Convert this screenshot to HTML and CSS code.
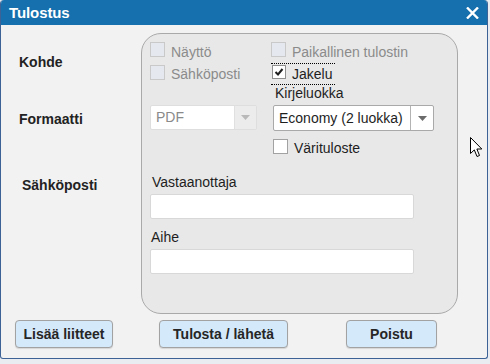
FILE: index.html
```html
<!DOCTYPE html>
<html lang="fi">
<head>
<meta charset="utf-8">
<title>Tulostus</title>
<link rel="stylesheet" href="styles.css">
</head>
<body>
<div class="window">
  <div class="titlebar">
    <span class="title">Tulostus</span>
    <svg class="close" width="13" height="12" viewBox="0 0 13 12"><path d="M1 0.5 L12 11.5 M12 0.5 L1 11.5" stroke="#fff" stroke-width="2.4" fill="none"/></svg>
  </div>
  <div class="content">
    <div class="main">
      <div class="labels">
        <div class="lbl kohde">Kohde</div>
        <div class="lbl formaatti">Formaatti</div>
        <div class="lbl sposti">Sähköposti</div>
      </div>
      <div class="panel">
        <div class="check r1"><span class="box disabled"></span><span class="txt dis">Näyttö</span></div>
        <div class="check r1"><span class="box disabled"></span><span class="txt dis">Paikallinen tulostin</span></div>
        <div class="check r2"><span class="box disabled"></span><span class="txt dis">Sähköposti</span></div>
        <div class="check focus"><span class="box small"><svg width="12" height="12" viewBox="0 0 12 12"><path d="M2.5 6 L5 8.5 L9.5 3" stroke="#1e1e1e" stroke-width="2" fill="none"/></svg></span><span class="txt">Jakelu</span></div>
        <div class="cell-empty"></div>
        <div class="kirje">Kirjeluokka</div>
        <div class="select pdf"><span class="val">PDF</span><span class="arr"><svg width="9" height="5" viewBox="0 0 9 5"><path d="M0 0 L9 0 L4.5 5 Z" fill="#b9b9b9"/></svg></span></div>
        <div class="select eco"><span class="val">Economy (2 luokka)</span><span class="arr"><svg width="9" height="5" viewBox="0 0 9 5"><path d="M0 0 L9 0 L4.5 5 Z" fill="#6b6b6b"/></svg></span></div>
        <div class="cell-empty"></div>
        <div class="check vari"><span class="box"></span><span class="txt">Värituloste</span></div>
        <div class="flabel l1">Vastaanottaja</div>
        <div class="input"></div>
        <div class="flabel l2">Aihe</div>
        <div class="input"></div>
      </div>
    </div>
    <div class="buttons">
      <button class="btn b1">Lisää liitteet</button>
      <button class="btn b2">Tulosta / lähetä</button>
      <button class="btn b3">Poistu</button>
    </div>
  </div>
  <svg class="cursor" width="13" height="21" viewBox="0 0 13 21"><path d="M0.5 0.5 L0.5 16.5 L4.3 12.9 L7 19.5 L9.5 18.5 L6.9 12 L11.8 12 Z" fill="#fff" stroke="#000" stroke-width="1"/></svg>
</div>
</body>
</html>
```
FILE: styles.css
```css
* { box-sizing: border-box; }
html, body { margin: 0; padding: 0; }
body {
  background: #e9edf1;
  font-family: "Liberation Sans", Arial, sans-serif;
  font-size: 14px;
  line-height: 16px;
  color: #1e1e1e;
  width: 490px;
  height: 364px;
  overflow: hidden;
}
.window {
  position: relative;
  width: 488px;
  height: 359px;
  background: #f2f2f2;
  border: 1px solid #3d6396;
  border-top: none;
  border-radius: 4px 4px 3px 3px;
  overflow: hidden;
}
.titlebar {
  height: 25px;
  background: #1570ad;
  display: flex;
  align-items: center;
  justify-content: space-between;
  padding: 0 8px 0 8px;
}
.title {
  color: #fff;
  font-weight: bold;
  font-size: 15px;
  line-height: 25px;
  letter-spacing: -0.1px;
}
.close { display: block; margin-top: 1px; margin-right: 0px; }
.main { display: flex; }
.labels { width: 140px; padding-left: 18px; }
.lbl { font-weight: bold; color: #222; }
.kohde { margin-top: 29px; }
.formaatti { margin-top: 41px; }
.sposti { margin-top: 50px; padding-left: 3px; }
.panel {
  margin-top: 8px;
  width: 317px;
  height: 281px;
  border: 1px solid #a9a9a9;
  border-radius: 20px;
  background: #e8e8e8;
  padding: 8px 0 0 8px;
  display: grid;
  grid-template-columns: 121px 164px;
  grid-template-rows: 21px 22px 20px 34px 35px 20px 35px 20px 25px;
  align-items: start;
}
.check { display: flex; align-items: flex-start; }
.box {
  width: 15px;
  height: 15px;
  border: 1px solid #a6a6a6;
  background: #fff;
  flex: none;
  display: flex;
  align-items: center;
  justify-content: center;
}
.box.disabled { background: #e5e8ee; border-color: #c9c9c9; }
.box.small { width: 14px; height: 14px; border-color: #8f8f8f; margin: 1px 0 0 1px; }
.txt { margin-left: 6px; margin-top: 2px; }
.txt.dis { color: #8b8b8b; }
.r2 .box { margin-top: 2px; }
.r2 .txt { margin-top: 3px; }
.focus {
  width: 64px;
  height: 22px;
  border-top: 1px dotted #000;
  border-bottom: 1px dotted #000;
}
.focus .txt { margin-left: 6px; margin-top: 2px; }
.kirje { margin-left: 4px; color: #1e1e1e; }
.select {
  height: 26px;
  display: flex;
  background: #fff;
  border-radius: 2px;
}
.select .val { flex: 1; padding-left: 5px; line-height: 24px; }
.select .arr { display: flex; align-items: center; justify-content: center; }
.pdf { width: 107px; height: 25px; border: 1px solid #dedede; }
.pdf .val { color: #8a8a8a; line-height: 23px; }
.pdf .arr { width: 22px; background: #ececec; border-left: 1px solid #e0e0e0; }
.eco { width: 161px; margin-left: 2px; border: 1px solid #a9a9a9; }
.eco .arr { width: 23px; border-left: 1px solid #b3b3b3; }
.vari { margin-left: 2px; }
.vari .box { border-color: #a2a2a2; }
.vari .txt { margin-left: 6px; margin-top: 1px; }
.flabel { grid-column: 1 / 3; color: #1e1e1e; }
.l1 { margin-left: 2px; }
.l2 { margin-left: 1px; }
.input {
  grid-column: 1 / 3;
  width: 264px;
  height: 25px;
  background: #fff;
  border: 1px solid #d8d8d8;
  border-radius: 2px;
}
.buttons { display: flex; padding-left: 14px; margin-top: 6px; }
.btn {
  height: 28px;
  background: #d4e9fa;
  border: 1px solid #a2a2a2;
  border-radius: 4px;
  font-family: "Liberation Sans", Arial, sans-serif;
  font-weight: bold;
  font-size: 14px;
  color: #262626;
  padding: 0;
  box-shadow: 0 1px 1px rgba(0,0,0,0.12);
}
.b1 { width: 98px; }
.b2 { width: 129px; margin-left: 46px; }
.b3 { width: 91px; margin-left: 58px; }
.cursor { position: absolute; left: 469px; top: 137px; }
```
